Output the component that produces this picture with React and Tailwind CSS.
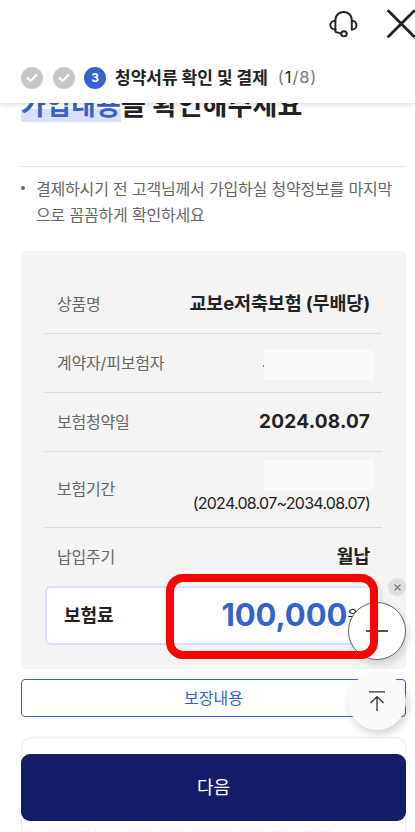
import React from "react";
import { FaCheck } from "react-icons/fa6";

const rows = [
  { label: "상품명", value: "교보e저축보험 (무배당)", style: "text-[18.5px] tracking-[-0.15px]" },
  { label: "계약자/피보험자", masked: true },
  { label: "보험청약일", value: "2024.08.07", style: "text-[19px] tracking-[0.25px]" },
  { label: "보험기간", masked: true, period: "(2024.08.07~2034.08.07)" },
  { label: "납입주기", value: "월납", style: "text-[18.5px] tracking-[-0.3px]" },
];

const DoneStep = () => (
  <span className="flex size-[22px] items-center justify-center rounded-full bg-[#c3c6cb]">
    <FaCheck className="size-3 text-white" stroke="white" strokeWidth="30" />
  </span>
);

const Header = () => (
  <header className="relative z-10 h-[103px] bg-white shadow-[0_1px_6px_rgba(0,0,0,0.16)]">
    <div className="flex h-[52px] items-start justify-end">
      <svg className="mt-2 mr-7 h-[30px] w-[30px]" viewBox="0 0 30 30" fill="none" stroke="#222" strokeWidth="1.9" strokeLinecap="round" strokeLinejoin="round">
        <path d="M6.4 21.5V12.2C6.4 1.2 22.8 1.2 22.8 12.2V21.5" />
        <path d="M6.4 12.8C-.4 12.8 -.4 21.3 6.4 21.5M22.8 12.8C29 12.8 29 21.5 22.8 21.5" />
        <path d="M6.4 21.5V23.8L12.2 25.6" />
        <ellipse cx="15" cy="25.8" rx="2.8" ry="2.6" />
      </svg>
      <svg className="mt-[9px] h-[29px] w-[28px]" viewBox="0 0 28 29" fill="none" stroke="#222" strokeWidth="2.8" strokeLinecap="round">
        <path d="M1.5 2L27 27.5M27 2L1.5 27.5" />
      </svg>
    </div>
    <div className="flex h-[51px] items-center pl-[21px]">
      <div className="flex gap-[9.5px]">
        <DoneStep />
        <DoneStep />
        <span className="flex size-[22px] items-center justify-center rounded-full bg-[#3562cc] text-[12px] font-bold text-white">3</span>
      </div>
      <strong className="ml-[9px] text-[17px] leading-6 font-bold whitespace-nowrap">청약서류 확인 및 결제</strong>
      <span className="ml-[10px] text-[16.5px] tracking-[0.9px] text-[#777]">
        (<span className="text-[#222]">1</span>/8)
      </span>
    </div>
  </header>
);

const Mask = () => <span className="-mr-[4px] block h-[31px] w-[110px] bg-[#fafafa]" />;

const Row = ({ row, last }) => (
  <div
    className={`flex items-center justify-between px-3 ${row.period ? "h-[76px] pb-[2px]" : "h-[59px]"} ${
      last ? "pb-[2px]" : "border-b border-[#dadada]"
    }`}
  >
    <span className="text-[16px] tracking-[-0.2px] text-[#666]">{row.label}</span>
    {row.period ? (
      <div className="flex flex-col items-end">
        <Mask />
        <span className="mb-[2px] text-[16px] leading-6 tracking-[-0.73px]">{row.period}</span>
      </div>
    ) : row.masked ? (
      <div className="relative mt-[3px]">
        <Mask />
        <span className="absolute top-[16px] -left-px h-[2px] w-px bg-[#888]" />
      </div>
    ) : (
      <strong className={`font-bold whitespace-nowrap ${row.style}`}>{row.value}</strong>
    )}
  </div>
);

const App = () => {
  return (
    <div className="relative h-[832px] w-[415px] overflow-hidden bg-white font-['Inter','Noto_Sans_CJK_KR',sans-serif] text-[#222]">
      <Header />

      <main className="pr-[9px] pl-[21px]">
        <h1 className="-mt-[14px] text-[27px] leading-[34px] font-bold tracking-[0.15px] whitespace-nowrap">
          <span className="bg-linear-to-b from-transparent from-60% to-[#dae0fc] to-60% text-[#3562cc]">가입내용</span>을 확인해주세요
        </h1>
        <hr className="mt-[43px] border-[#e5e5e5]" />
        <div className="mt-[9px] flex text-[16px] leading-[26px] tracking-[-0.18px] text-[#666]">
          <span className="mt-[10px] mr-[11px] size-[4px] shrink-0 rounded-full bg-[#666]" />
          <p className="whitespace-nowrap">
            결제하시기 전 고객님께서 가입하실 청약정보를 마지막
            <br />
            으로 꼼꼼하게 확인하세요
          </p>
        </div>

        <section className="mt-[23px] h-[418px] rounded-[5px] bg-[#f4f4f4] px-6 pt-6">
          {rows.map((row, i) => (
            <Row key={row.label} row={row} last={i === rows.length - 1} />
          ))}
          <div className="-mt-px flex h-[59px] items-center justify-between rounded-md border-2 border-[#d9e0fc] bg-white pr-[18px] pl-[17px]">
            <strong className="text-[18px] font-bold">보험료</strong>
            <span className="flex items-center">
              <strong className="text-[31px] font-bold tracking-[-0.1px] text-[#3562cc]">100,000</strong>
              <span className="text-[16px]">원</span>
            </span>
          </div>
        </section>

        <button className="mt-[10px] block h-[38px] w-full rounded-[4px] border border-[#3562cc] pb-px text-[16px] text-[#3562cc]">
          보장내용
        </button>
        <div className="mt-5 h-[95px] rounded-t-[10px] border border-b-0 border-[#ececec] pt-[87px] pl-[26px] text-[16px] leading-6 whitespace-nowrap text-[#f6f6f6]">
          예금자보호법에 따라 해약환급금(또는 만기 시 보
        </div>
      </main>

      {/* floating controls */}
      <button className="absolute top-[578px] left-[388px] flex size-[18px] items-center justify-center rounded-full bg-[#dcdee2]">
        <svg className="size-[7px]" viewBox="0 0 7 7" stroke="#777" strokeWidth="1.1">
          <path d="M.5 .5L6.5 6.5M6.5 .5L.5 6.5" />
        </svg>
      </button>
      <button className="absolute top-[602px] left-[348px] flex size-[58px] items-center justify-center rounded-full border border-[#666] bg-white shadow-[2px_4px_9px_rgba(0,0,0,0.16)]">
        <span className="h-[1.5px] w-[22px] bg-[#555]" />
      </button>
      <button className="absolute top-[672px] left-[348px] flex size-[58px] items-center justify-center rounded-full bg-[#fafafa] shadow-[2px_4px_9px_rgba(0,0,0,0.18)]">
        <svg className="mr-px h-5 w-4" viewBox="0 0 16 20" fill="none" stroke="#333" strokeWidth="1.3">
          <path d="M0 .8H16M8 6V20M1.5 12L8 5.7L14.5 12" />
        </svg>
      </button>

      {/* premium highlight */}
      <div className="pointer-events-none absolute top-[574px] left-[166px] h-[85px] w-[212px] rounded-[17px] border-8 border-[#ff0000]" />

      <button className="absolute top-[754px] left-[21px] h-[67px] w-[385px] rounded-[9px] bg-[#141b6b] text-[18px] text-white">
        다음
      </button>
    </div>
  );
};

export default App;
